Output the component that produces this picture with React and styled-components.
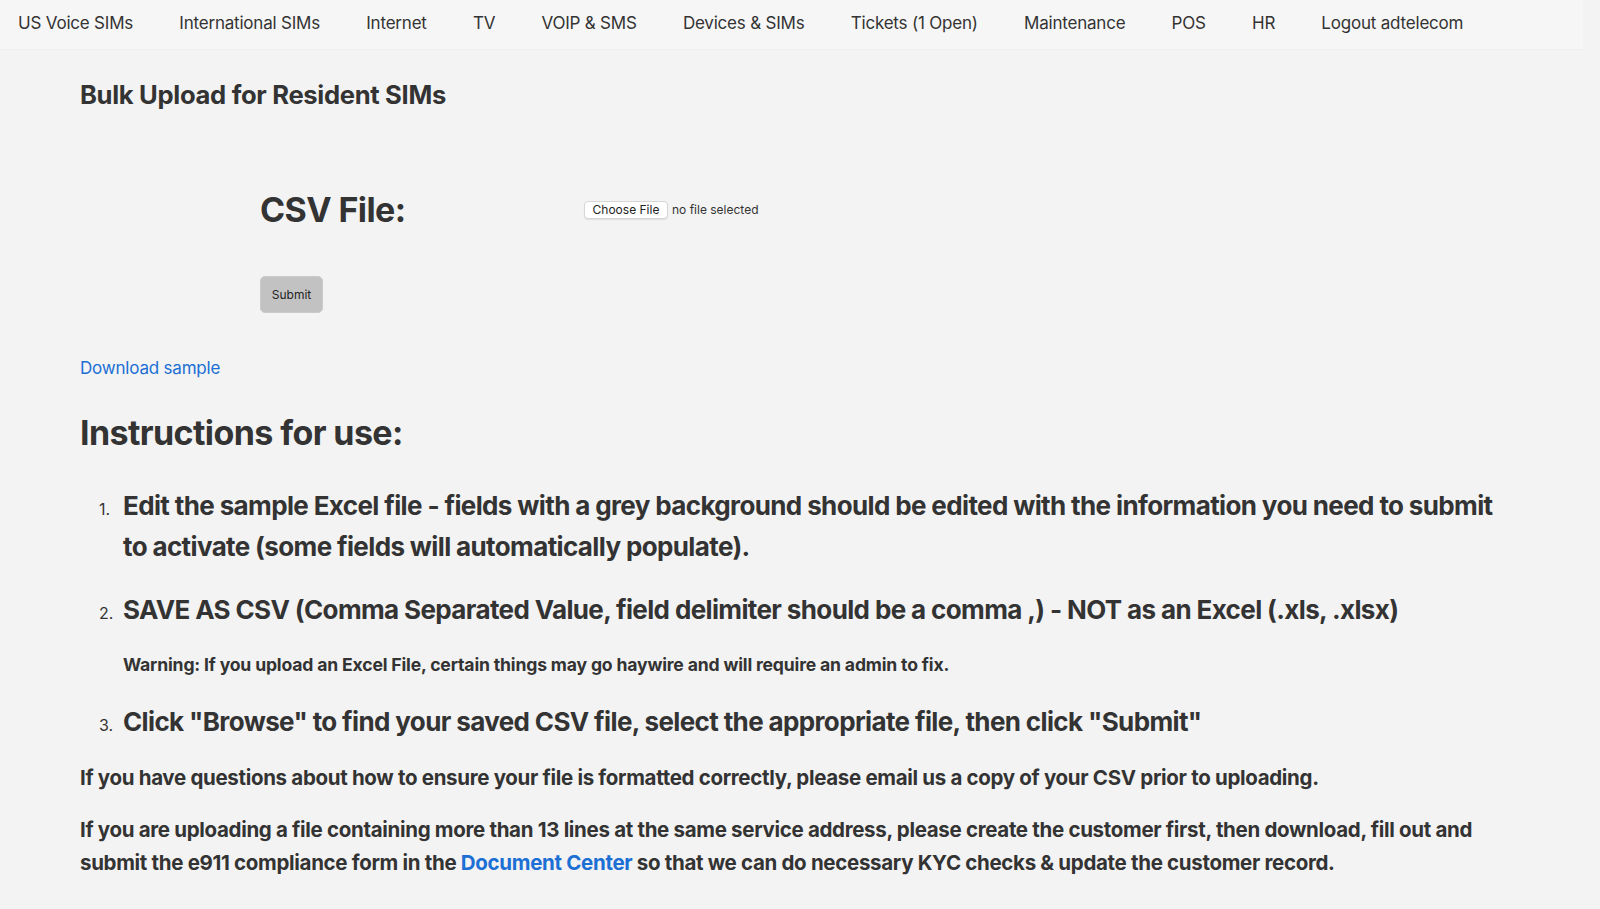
import React from 'react'
import styled, { createGlobalStyle } from "styled-components";

const GlobalStyle = createGlobalStyle`
    html, body {
        margin:0;
        padding:0;
        background:#f3f3f3;
    }
    body{
        font-family:Inter, "Noto Sans", "Liberation Sans", sans-serif;
        color:#333;
    }
`

const navItems = [
    "US Voice SIMs",
    "International SIMs",
    "Internet",
    "TV",
    "VOIP & SMS",
    "Devices & SIMs",
    "Tickets (1 Open)",
    "Maintenance",
    "POS",
    "HR",
    "Logout adtelecom",
]

const steps = [
    {
        text: "Edit the sample Excel file - fields with a grey background should be edited with the information you need to submit to activate (some fields will automatically populate).",
    },
    {
        text: "SAVE AS CSV (Comma Separated Value, field delimiter should be a comma ,) - NOT as an Excel (.xls, .xlsx)",
        note: "Warning: If you upload an Excel File, certain things may go haywire and will require an admin to fix.",
    },
    {
        text: "Click \"Browse\" to find your saved CSV file, select the appropriate file, then click \"Submit\"",
    },
]

const App = () => {
    return (
        <>
            <GlobalStyle />
            <NavBar>
                {navItems.map((item) => (
                    <NavLink key={item} href="#">{item}</NavLink>
                ))}
            </NavBar>
            <Main>
                <Title>Bulk Upload for Resident SIMs</Title>
                <UploadForm onSubmit={(e) => e.preventDefault()}>
                    <FieldRow>
                        <FieldLabel>CSV File:</FieldLabel>
                        <FilePicker>
                            <ChooseButton type="button">Choose File</ChooseButton>
                            <FileName>no file selected</FileName>
                        </FilePicker>
                    </FieldRow>
                    <SubmitButton type="submit">Submit</SubmitButton>
                </UploadForm>
                <DownloadLink href="#">Download sample</DownloadLink>
                <SectionTitle>Instructions for use:</SectionTitle>
                <Steps>
                    {steps.map((step, i) => (
                        <Step key={i}>
                            <Marker>{i + 1}.</Marker>
                            <StepBody>
                                <StepText>{step.text}</StepText>
                                {step.note && <StepNote>{step.note}</StepNote>}
                            </StepBody>
                        </Step>
                    ))}
                </Steps>
                <Note>If you have questions about how to ensure your file is formatted correctly, please email us a copy of your CSV prior to uploading.</Note>
                <Note $gap={20}>
                    If you are uploading a file containing more than 13 lines at the same service address, please create the customer first, then download, fill out and submit the e911 compliance form in the <InlineLink href="#">Document Center</InlineLink> so that we can do necessary KYC checks &amp; update the customer record.
                </Note>
            </Main>
        </>
    )
}

export default App

const NavBar = styled.nav`
    display:flex;
    align-items:flex-start;
    gap:46.2px;
    height:50px;
    width:1583px;
    padding:13px 0 0 18px;
    box-sizing:border-box;
    background:#f6f6f6;
    border-bottom:1px solid #efefef;
`
const NavLink = styled.a`
    font-size:17px;
    line-height:21px;
    color:#333;
    text-decoration:none;
    white-space:nowrap;
    letter-spacing:-0.2px;
`
const Main = styled.main`
    display:flex;
    flex-direction:column;
    align-items:flex-start;
    padding:0 100px 40px 80px;
`
const Title = styled.h1`
    margin:30px 0 0;
    font-size:25.6px;
    line-height:30px;
    font-weight:700;
    letter-spacing:-0.32px;
`
const UploadForm = styled.form`
    display:flex;
    flex-direction:column;
    align-items:flex-start;
    padding-left:180px;
    margin-top:79px;
`
const FieldRow = styled.div`
    display:grid;
    grid-template-columns:324px auto;
    align-items:center;
`
const FieldLabel = styled.label`
    font-size:34px;
    line-height:41px;
    font-weight:700;
    letter-spacing:-0.6px;
`
const FilePicker = styled.div`
    display:flex;
    align-items:center;
    gap:4px;
`
const ChooseButton = styled.button`
    font-family:inherit;
    font-size:12px;
    color:#222;
    background:#fff;
    border:1px solid #d6d6d6;
    border-radius:4px;
    height:18px;
    width:84px;
    padding:0;
    box-shadow:0 1px 1px rgba(0,0,0,0.08);
`
const FileName = styled.span`
    font-size:12px;
    color:#333;
`
const SubmitButton = styled.button`
    margin-top:46px;
    width:63px;
    height:37px;
    font-family:inherit;
    font-size:12px;
    color:#222;
    background:#c2c2c2;
    border:1px solid #cacaca;
    border-radius:5px;
    padding:0;
`
const DownloadLink = styled.a`
    margin-top:45px;
    font-size:17px;
    line-height:20px;
    color:#1c6fd4;
    text-decoration:none;
    letter-spacing:-0.2px;
`
const SectionTitle = styled.h2`
    margin:34px 0 0;
    font-size:34px;
    line-height:41px;
    font-weight:700;
    letter-spacing:-0.6px;
`
const Steps = styled.ol`
    list-style:none;
    margin:32px 0 0;
    padding:0;
    display:flex;
    flex-direction:column;
    gap:22px;
`
const Step = styled.li`
    display:flex;
    align-items:baseline;
`
const Marker = styled.span`
    width:43px;
    box-sizing:border-box;
    padding-left:19px;
    font-size:16px;
    flex-shrink:0;
`
const StepBody = styled.div`
    display:flex;
    flex-direction:column;
`
const StepText = styled.span`
    font-size:26px;
    line-height:41px;
    font-weight:700;
    letter-spacing:-0.63px;
`
const StepNote = styled.span`
    margin-top:25px;
    font-size:17.6px;
    line-height:20px;
    font-weight:700;
    letter-spacing:-0.17px;
    margin-bottom:4px;
`
const Note = styled.p`
    margin:${(p) => p.$gap || 20}px 0 0;
    font-size:20.5px;
    line-height:32.4px;
    font-weight:700;
    letter-spacing:-0.32px;
`
const InlineLink = styled.a`
    color:#1c6fd4;
    text-decoration:none;
`
